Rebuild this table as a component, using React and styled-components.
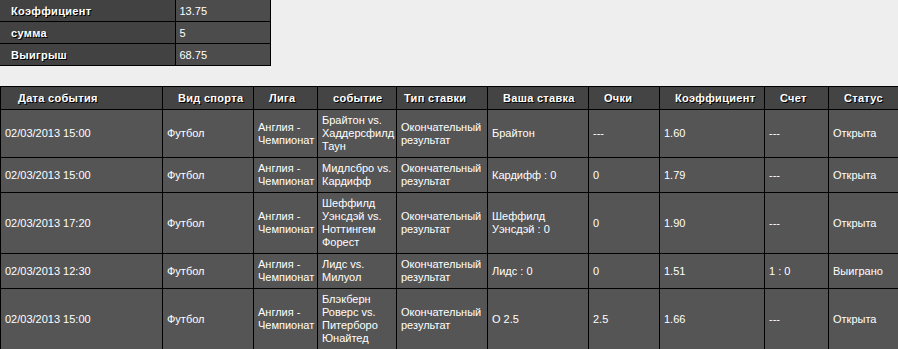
import styled, { createGlobalStyle } from 'styled-components';

const GlobalStyle = createGlobalStyle`
  html, body {
    margin: 0;
    padding: 0;
    background: #eeeeee;
    overflow: hidden;
  }
  body {
    font-family: "Liberation Sans", Arial, sans-serif;
    font-size: 11px;
    color: #ffffff;
  }
`

const Page = styled.div`
    display: flex;
    flex-direction: column;
    gap: 20px;
`

const Summary = styled.table`
    border-collapse: collapse;
    width: 271px;
    margin-top: -1px;
    table-layout: fixed;
`

const SummaryLabel = styled.th`
    box-sizing: border-box;
    width: 175px;
    height: 21px;
    padding: 0 0 0 11px;
    background: #424242;
    border: 1px solid #000;
    border-left: none;
    text-align: left;
    font-weight: bold;
    letter-spacing: 0.3px;
    text-shadow: 1px 1px 0 #000;
`

const SummaryValue = styled.td`
    height: 21px;
    padding: 0 0 0 4px;
    background: #4c4c4c;
    border: 1px solid #000;
`

const Bets = styled.table`
    border-collapse: collapse;
    table-layout: fixed;
    width: 900px;
`

const HeadCell = styled.th`
    box-sizing: border-box;
    width: ${(p) => p.$w}px;
    height: 23px;
    padding: 0 0 0 ${(p) => p.$pad ?? 15}px;
    background: #444444;
    border: 1px solid #000;
    text-align: left;
    font-weight: bold;
    letter-spacing: 0.3px;
    white-space: nowrap;
    text-shadow: 1px 1px 0 #000;
`

const Cell = styled.td`
    padding: 4px 3px 4px 4px;
    background: #555555;
    border: 1px solid #000;
    line-height: 13px;
    vertical-align: middle;
`

const columns = [
  { title: 'Дата события', w: 162, pad: 17 },
  { title: 'Вид спорта', w: 91 },
  { title: 'Лига', w: 64 },
  { title: 'событие', w: 79 },
  { title: 'Тип ставки', w: 91, pad: 7 },
  { title: 'Ваша ставка', w: 101 },
  { title: 'Очки', w: 71 },
  { title: 'Коэффициент', w: 105 },
  { title: 'Счет', w: 64 },
  { title: 'Статус', w: 72 },
]

const bets = [
  ['02/03/2013 15:00', 'Футбол', 'Англия - Чемпионат', 'Брайтон vs. Хаддерсфилд Таун', 'Окончательный результат', 'Брайтон', '---', '1.60', '---', 'Открыта'],
  ['02/03/2013 15:00', 'Футбол', 'Англия - Чемпионат', 'Мидлсбро vs. Кардифф', 'Окончательный результат', 'Кардифф : 0', '0', '1.79', '---', 'Открыта'],
  ['02/03/2013 17:20', 'Футбол', 'Англия - Чемпионат', 'Шеффилд Уэнсдэй vs. Ноттингем Форест', 'Окончательный результат', 'Шеффилд Уэнсдэй : 0', '0', '1.90', '---', 'Открыта'],
  ['02/03/2013 12:30', 'Футбол', 'Англия - Чемпионат', 'Лидс vs. Милуол', 'Окончательный результат', 'Лидс : 0', '0', '1.51', '1 : 0', 'Выиграно'],
  ['02/03/2013 15:00', 'Футбол', 'Англия - Чемпионат', 'Блэкберн Роверс vs. Питерборо Юнайтед', 'Окончательный результат', 'О 2.5', '2.5', '1.66', '---', 'Открыта'],
]

const summary = [
  ['Коэффициент', '13.75'],
  ['сумма', '5'],
  ['Выигрыш', '68.75'],
]

export default function App() {
  return (
    <>
      <GlobalStyle />
      <Page>
        <Summary>
          <tbody>
            {summary.map(([label, value]) => (
              <tr key={label}>
                <SummaryLabel>{label}</SummaryLabel>
                <SummaryValue>{value}</SummaryValue>
              </tr>
            ))}
          </tbody>
        </Summary>
        <Bets>
          <thead>
            <tr>
              {columns.map((c) => (
                <HeadCell key={c.title} $w={c.w} $pad={c.pad}>{c.title}</HeadCell>
              ))}
            </tr>
          </thead>
          <tbody>
            {bets.map((row, i) => (
              <tr key={i}>
                {row.map((v, j) => (
                  <Cell key={j}>{v}</Cell>
                ))}
              </tr>
            ))}
          </tbody>
        </Bets>
      </Page>
    </>
  );
}
